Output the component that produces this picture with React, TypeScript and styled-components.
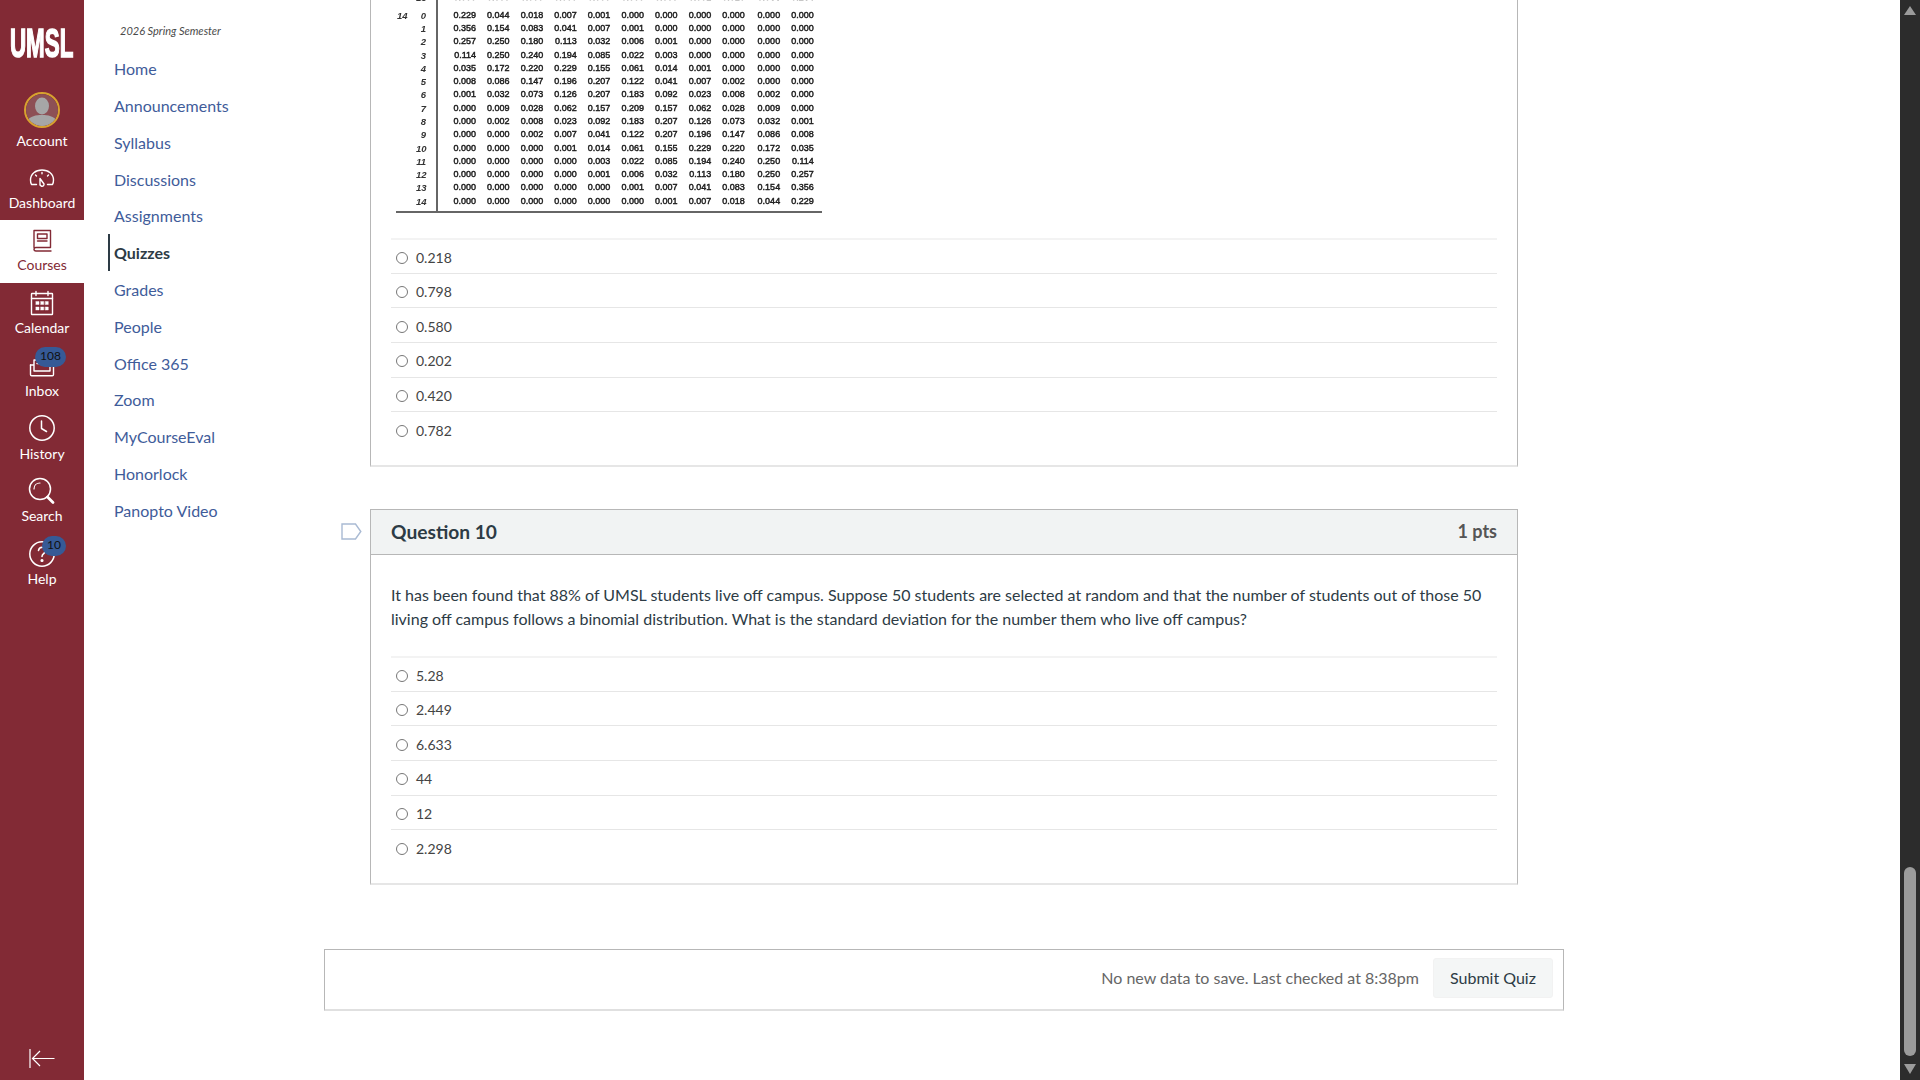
import styled, { createGlobalStyle } from "styled-components";
import { ReactNode } from "react";

const GlobalStyle = createGlobalStyle`
  html, body {
    margin: 0;
    height: 100%;
    overflow: hidden;
    background: #fff;
  }
  body {
    font-family: Lato, "Open Sans", sans-serif;
    color: #2d3b45;
  }
`;

const maroon = "#822a35";

const courseLinks = [
  "Home",
  "Announcements",
  "Syllabus",
  "Discussions",
  "Assignments",
  "Quizzes",
  "Grades",
  "People",
  "Office 365",
  "Zoom",
  "MyCourseEval",
  "Honorlock",
  "Panopto Video",
];

const tableRows = [
  ["", "13", "0.000", "0.000", "0.000", "0.000", "0.000", "0.000", "0.000", "0.001", "0.010", "0.055", "0.254"],
  ["14", "0", "0.229", "0.044", "0.018", "0.007", "0.001", "0.000", "0.000", "0.000", "0.000", "0.000", "0.000"],
  ["", "1", "0.356", "0.154", "0.083", "0.041", "0.007", "0.001", "0.000", "0.000", "0.000", "0.000", "0.000"],
  ["", "2", "0.257", "0.250", "0.180", "0.113", "0.032", "0.006", "0.001", "0.000", "0.000", "0.000", "0.000"],
  ["", "3", "0.114", "0.250", "0.240", "0.194", "0.085", "0.022", "0.003", "0.000", "0.000", "0.000", "0.000"],
  ["", "4", "0.035", "0.172", "0.220", "0.229", "0.155", "0.061", "0.014", "0.001", "0.000", "0.000", "0.000"],
  ["", "5", "0.008", "0.086", "0.147", "0.196", "0.207", "0.122", "0.041", "0.007", "0.002", "0.000", "0.000"],
  ["", "6", "0.001", "0.032", "0.073", "0.126", "0.207", "0.183", "0.092", "0.023", "0.008", "0.002", "0.000"],
  ["", "7", "0.000", "0.009", "0.028", "0.062", "0.157", "0.209", "0.157", "0.062", "0.028", "0.009", "0.000"],
  ["", "8", "0.000", "0.002", "0.008", "0.023", "0.092", "0.183", "0.207", "0.126", "0.073", "0.032", "0.001"],
  ["", "9", "0.000", "0.000", "0.002", "0.007", "0.041", "0.122", "0.207", "0.196", "0.147", "0.086", "0.008"],
  ["", "10", "0.000", "0.000", "0.000", "0.001", "0.014", "0.061", "0.155", "0.229", "0.220", "0.172", "0.035"],
  ["", "11", "0.000", "0.000", "0.000", "0.000", "0.003", "0.022", "0.085", "0.194", "0.240", "0.250", "0.114"],
  ["", "12", "0.000", "0.000", "0.000", "0.000", "0.001", "0.006", "0.032", "0.113", "0.180", "0.250", "0.257"],
  ["", "13", "0.000", "0.000", "0.000", "0.000", "0.000", "0.001", "0.007", "0.041", "0.083", "0.154", "0.356"],
  ["", "14", "0.000", "0.000", "0.000", "0.000", "0.000", "0.000", "0.001", "0.007", "0.018", "0.044", "0.229"],
];

const Icon = ({ children }: { children: ReactNode }) => (
  <svg
    width="28"
    height="28"
    viewBox="0 0 28 28"
    fill="none"
    stroke="currentColor"
    strokeWidth="1.4"
    strokeLinecap="round"
    strokeLinejoin="round"
  >
    {children}
  </svg>
);

const App = () => {
  return (
    <>
      <GlobalStyle />
      <Page>
        <GlobalNav>
          <Logo>
            <LogoText>UMSL</LogoText>
          </Logo>
          <AccountItem>
            <Avatar>
              <svg width="32" height="32" viewBox="0 0 32 32">
                <circle cx="16" cy="16" r="16" fill="#8d5055" />
                <ellipse cx="16" cy="12" rx="7" ry="8.500" fill="#a6a6a6" />
                <path d="M1 27c3-5 9-6 15-6s12 1 15 6c-3 4-9 5-15 5s-12-1-15-5z" fill="#a6a6a6" />
              </svg>
            </Avatar>
            <span>Account</span>
          </AccountItem>
          <NavItem>
            <Icon>
              <path d="M3.500 21.500h5M19.500 21.500h5M3.500 21.500c-.7-1.200-1-2.800-1-4.500C2.500 10.800 7.500 7 14 7s11.500 3.800 11.500 10c0 1.700-.3 3.300-1 4.500" />
              <path d="M12 15.500l4 5.500c.3 1.500-1 2.500-2.400 2.200-1.200-.3-1.800-1.300-1.600-2.500z" />
              <path d="M14 9.500v1.300M7.500 12l1 1M20.500 12l-1 1" />
            </Icon>
            <span>Dashboard</span>
          </NavItem>
          <NavItem $active>
            <Icon>
              <path d="M6 21.500V4.500h16.500v17H8c-1.200 0-2 .8-2 1.800s.8 1.700 2 1.700h15" />
              <path d="M9.500 8h9.500v4.500H9.500zM9.500 15h9.500" />
            </Icon>
            <span>Courses</span>
          </NavItem>
          <NavItem>
            <Icon>
              <rect x="3.500" y="4.500" width="21" height="21" rx="0.500" />
              <path d="M3.500 9.500h21M8 2.500v4M20 2.500v4" />
              <path
                d="M8 12.500h3v3H8zM12.700 12.500h3v3h-3zM17.300 12.500h3v3h-3zM8 18h3v3H8zM12.700 18h3v3h-3zM17.300 18h3v3h-3z"
                fill="currentColor"
                strokeWidth="0.400"
              />
            </Icon>
            <span>Calendar</span>
          </NavItem>
          <NavItem>
            <Icon>
              <path d="M2.500 14v9.500c0 .8.500 1.300 1.200 1.300h20.600c.7 0 1.200-.5 1.200-1.300V14" />
              <path d="M2.500 14h3.500v6h16v-6h3.500M6 14V9h16v5M9 9V5h10v4M9 12.500h10" />
            </Icon>
            <Badge $wide>108</Badge>
            <span>Inbox</span>
          </NavItem>
          <NavItem>
            <Icon>
              <circle cx="14" cy="14" r="12.200" strokeWidth="1.500" />
              <path d="M13.500 7v7.500l5 3" strokeWidth="1.500" />
            </Icon>
            <span>History</span>
          </NavItem>
          <NavItem>
            <Icon>
              <circle cx="12" cy="12" r="10.500" strokeWidth="1.500" />
              <path d="M19.500 20l5.500 5.500" strokeWidth="2.800" />
              <path d="M6 12c0-3.500 2.500-6 6-6" strokeWidth="1.200" />
            </Icon>
            <span>Search</span>
          </NavItem>
          <NavItem>
            <Icon>
              <circle cx="14" cy="14" r="12.200" strokeWidth="1.500" />
              <path d="M10.500 10.500c.3-2 1.700-3.200 3.700-3.200s3.500 1.300 3.500 3.200c0 2.800-3.700 3-3.700 6" strokeWidth="1.600" />
              <circle cx="14" cy="20.500" r="0.900" fill="currentColor" />
            </Icon>
            <Badge>10</Badge>
            <span>Help</span>
          </NavItem>
          <CollapseButton>
            <svg width="26" height="19" viewBox="0 0 26 19" fill="none" stroke="currentColor" strokeWidth="1.200">
              <path d="M1 0v19M25.500 9.500H3.500M11 2L3.500 9.500 11 17" />
            </svg>
          </CollapseButton>
        </GlobalNav>

        <CourseNav>
          <Semester>2026 Spring Semester</Semester>
          {courseLinks.map((link) => (
            <CourseLink key={link} $active={link === "Quizzes"}>
              {link}
            </CourseLink>
          ))}
        </CourseNav>

        <Main>
          <QuestionRow>
            <span />
            <QuestionCard $cut>
              <CutBody>
                <BinomialTable>
                  {tableRows.map((row, i) => (
                    <TableRow key={i}>
                      <RowLabel>{row[0]}</RowLabel>
                      <RowIndex>{row[1]}</RowIndex>
                      {row.slice(2).map((v, j) => (
                        <Cell key={j}>{v}</Cell>
                      ))}
                    </TableRow>
                  ))}
                </BinomialTable>
                <Answers>
                  {["0.218", "0.798", "0.580", "0.202", "0.420", "0.782"].map((a) => (
                    <Answer key={a}>
                      <Radio type="radio" name="q9" />
                      {a}
                    </Answer>
                  ))}
                </Answers>
              </CutBody>
            </QuestionCard>
          </QuestionRow>

          <QuestionRow $next>
            <FlagCell>
              <svg width="21" height="17" viewBox="0 0 21 17" fill="none" stroke="#a9bad3" strokeWidth="1.400">
                <path d="M1 1h13.500l5.300 7.500-5.300 7.500H1z" />
              </svg>
            </FlagCell>
            <QuestionCard>
              <Header>
                <Title>Question 10</Title>
                <Points>1 pts</Points>
              </Header>
              <Body>
                <Prompt>
                  It has been found that 88% of UMSL students live off campus. Suppose 50 students are selected at
                  random and that the number of students out of those 50 living off campus follows a binomial
                  distribution. What is the standard deviation for the number them who live off campus?
                </Prompt>
                <Answers>
                  {["5.28", "2.449", "6.633", "44", "12", "2.298"].map((a) => (
                    <Answer key={a}>
                      <Radio type="radio" name="q10" />
                      {a}
                    </Answer>
                  ))}
                </Answers>
              </Body>
            </QuestionCard>
          </QuestionRow>

          <FormActions>
            <SaveStatus>No new data to save. Last checked at 8:38pm</SaveStatus>
            <SubmitButton>Submit Quiz</SubmitButton>
          </FormActions>
        </Main>

        <Scrollbar>
          <ArrowUp />
          <ScrollThumb />
          <ArrowDown />
        </Scrollbar>
      </Page>
    </>
  );
};

export default App;

const Page = styled.div`
  display: flex;
  height: 1080px;
  width: 1920px;
  overflow: hidden;
`;

const GlobalNav = styled.nav`
  flex: 0 0 84px;
  min-width: 0;
  width: 84px;
  background: ${maroon};
  color: #fff;
  display: flex;
  flex-direction: column;
`;

const Logo = styled.div`
  height: 85px;
  width: 84px;
  display: flex;
  align-items: center;
  justify-content: center;
  overflow: hidden;
`;

const LogoText = styled.span`
  display: inline-block;
  font-family: "Liberation Sans", Arial, sans-serif;
  font-weight: 700;
  font-size: 40px;
  line-height: 40px;
  color: #fff;
  -webkit-text-stroke: 1.6px #fff;
  transform: scaleX(0.56);
`;

const NavItem = styled.a<{ $active?: boolean }>`
  position: relative;
  height: 62.75px;
  box-sizing: border-box;
  padding-top: 6px;
  display: flex;
  flex-direction: column;
  align-items: center;
  gap: 2.5px;
  font-size: 14px;
  line-height: 18px;
  background: ${(p) => (p.$active ? "#fff" : "transparent")};
  color: ${(p) => (p.$active ? maroon : "#fff")};
`;

const AccountItem = styled(NavItem)`
  height: 72px;
  padding-top: 7px;
  gap: 3.5px;
`;

const Avatar = styled.div`
  width: 36px;
  height: 36px;
  box-sizing: border-box;
  border: 2px solid #d7a22f;
  border-radius: 50%;
  overflow: hidden;
  svg {
    display: block;
  }
`;

const Badge = styled.span<{ $wide?: boolean }>`
  position: absolute;
  top: 2px;
  right: 18px;
  min-width: ${(p) => (p.$wide ? "31px" : "24px")};
  height: 20px;
  border-radius: 10px;
  background: #365a96;
  color: #111;
  font-size: 12px;
  line-height: 18px;
  text-align: center;
`;

const CollapseButton = styled.div`
  margin-top: auto;
  height: 31px;
  display: flex;
  justify-content: center;
  padding-right: 1px;
`;

const CourseNav = styled.aside`
  flex: 0 0 240px;
  box-sizing: border-box;
  padding: 22px 0 0 24px;
  display: flex;
  flex-direction: column;
`;

const Semester = styled.div`
  font-size: 11px;
  font-style: italic;
  line-height: 18px;
  color: #4a4a4a;
  padding-left: 12px;
  margin-bottom: 10.500px;
`;

const CourseLink = styled.a<{ $active?: boolean }>`
  height: 36.77px;
  display: flex;
  align-items: center;
  padding-left: 4px;
  font-size: 16px;
  color: ${(p) => (p.$active ? "#2d3b45" : "#3f5c9a")};
  font-weight: ${(p) => (p.$active ? 700 : 400)};
  border-left: 2px solid ${(p) => (p.$active ? "#2d3b45" : "transparent")};
`;

const Main = styled.main`
  flex: 0 0 1240px;
  display: flex;
  flex-direction: column;
`;

const QuestionRow = styled.div<{ $next?: boolean }>`
  display: grid;
  grid-template-columns: 46px 1148px;
  margin-top: ${(p) => (p.$next ? "42px" : "0")};
`;

const FlagCell = styled.div`
  padding: 14px 0 0 17px;
`;

const QuestionCard = styled.section<{ $cut?: boolean }>`
  box-sizing: border-box;
  border: 1px solid #b7b7b7;
  border-top-width: ${(p) => (p.$cut ? "0" : "1px")};
  border-bottom: 2px solid #e6e6e6;
`;

const Header = styled.header`
  height: 45px;
  box-sizing: border-box;
  background: #f1f3f3;
  border-bottom: 1px solid #b7b7b7;
  padding: 0 20px 1px;
  display: flex;
  align-items: center;
  justify-content: space-between;
`;

const Title = styled.h2`
  margin: 0;
  font-size: 19.2px;
  font-weight: 700;
  color: #2d3b45;
`;

const Points = styled.span`
  font-size: 18px;
  font-weight: 700;
  color: #555;
`;

const Body = styled.div`
  padding: 28px 20px 19px;
`;

const CutBody = styled(Body)`
  padding-top: 0;
`;

const Prompt = styled.p`
  margin: 0 0 25px;
  font-size: 16px;
  line-height: 24px;
  color: #2d3b45;
`;

const BinomialTable = styled.div`
  width: 426px;
  margin: -9.500px 0 25px 5px;
  border-bottom: 2px solid #666;
  font-family: "Liberation Sans", Arial, sans-serif;
  filter: blur(0.3px);
`;

const TableRow = styled.div`
  display: grid;
  grid-template-columns: 20px 22px 44px repeat(8, 33.6px) 35.4px 33.6px;
  height: 13.29px;
  line-height: 13.29px;
  white-space: nowrap;
  &:nth-child(2) {
    height: 18.29px;
    & > * {
      padding-top: 5px;
    }
  }
  &:last-child {
    height: 16.29px;
  }
`;

const RowLabel = styled.span`
  font-size: 9.5px;
  font-style: italic;
  font-weight: 700;
  color: #333;
  padding-left: 1px;
`;

const RowIndex = styled(RowLabel)`
  padding: 0 10px 0 0;
  text-align: right;
  border-right: 2px solid #666;
`;

const Cell = styled.span`
  font-size: 9px;
  color: #1c1c1c;
  -webkit-text-stroke: 0.45px #1c1c1c;
  text-align: right;
  padding-right: 6px;
`;

const Answers = styled.div`
  display: flex;
  flex-direction: column;
`;

const Answer = styled.label`
  height: 34.67px;
  box-sizing: border-box;
  border-top: 1px solid #e6e6e6;
  padding: 2px 0 0 5px;
  display: flex;
  align-items: center;
  gap: 8px;
  font-size: 14px;
  color: #444;
  &:first-child {
    border-top: 2px solid #f3f3f3;
  }
`;

const Radio = styled.input`
  appearance: none;
  width: 12px;
  height: 12px;
  margin: 1px 0 0;
  border: 1px solid #777;
  border-radius: 50%;
  background: #fff;
`;

const FormActions = styled.div`
  margin-top: 64px;
  height: 62px;
  box-sizing: border-box;
  border: 1px solid #b7b7b7;
  border-bottom: 2px solid #e0e0e0;
  padding: 0 10px 3px 0;
  display: flex;
  align-items: center;
  justify-content: flex-end;
  gap: 14px;
`;

const SaveStatus = styled.span`
  font-size: 16px;
  color: #666;
`;

const SubmitButton = styled.button`
  width: 120px;
  height: 40px;
  border: 1px solid #f2f2f2;
  border-radius: 3px;
  background: #f4f6f6;
  color: #2d3b45;
  font-family: inherit;
  font-size: 16px;
`;

const Scrollbar = styled.div`
  margin-left: auto;
  flex: 0 0 20px;
  background: #2c2c2c;
  display: flex;
  flex-direction: column;
  align-items: center;
  padding: 6px 0;
  box-sizing: border-box;
`;

const ArrowUp = styled.div`
  width: 0;
  height: 0;
  border-left: 6px solid transparent;
  border-right: 6px solid transparent;
  border-bottom: 9px solid #9b9b9b;
`;

const ScrollThumb = styled.div`
  width: 12px;
  height: 189px;
  margin-top: auto;
  border-radius: 6px;
  background: #9b9b9b;
`;

const ArrowDown = styled.div`
  width: 0;
  height: 0;
  margin-top: 8px;
  border-left: 6px solid transparent;
  border-right: 6px solid transparent;
  border-top: 10px solid #9b9b9b;
`;
